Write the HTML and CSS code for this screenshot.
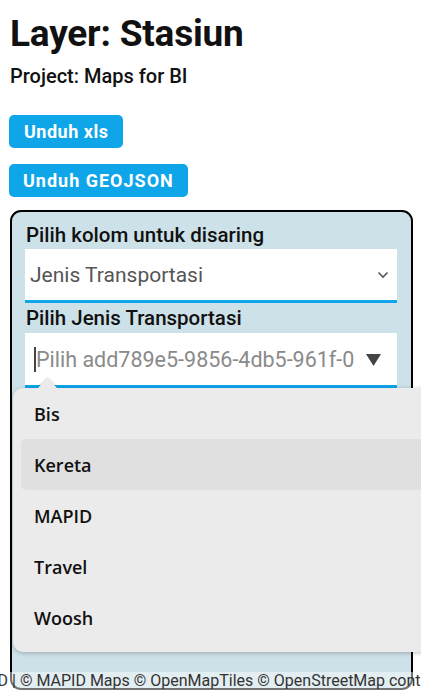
FILE: index.html
```html
<!DOCTYPE html>
<html>
<head>
<meta charset="utf-8">
<link rel="stylesheet" href="styles.css">
</head>
<body>
<div class="page">
  <h1 class="title">Layer: Stasiun</h1>
  <div class="project">Project: Maps for BI</div>
  <div class="actions">
    <button class="btn">Unduh xls</button>
    <button class="btn btn-wide">Unduh GEOJSON</button>
  </div>
  <div class="panel">
    <div class="label">Pilih kolom untuk disaring</div>
    <div class="select">
      <span class="select-text">Jenis Transportasi</span>
      <svg class="chev" width="12" height="8" viewBox="0 0 12 8"><path d="M1.5 1.5 L6 6 L10.5 1.5" fill="none" stroke="#555" stroke-width="1.6"/></svg>
    </div>
    <div class="label label2">Pilih Jenis Transportasi</div>
    <div class="combo">
      <span class="caret"></span>
      <span class="placeholder">Pilih add789e5-9856-4db5-961f-0</span>
      <svg class="tri" width="15" height="12" viewBox="0 0 15 12"><polygon points="0,0 15,0 7.5,12" fill="#444"/></svg>
    </div>
    <div class="menu">
      <span class="notch"></span>
      <div class="item">Bis</div>
      <div class="item active">Kereta</div>
      <div class="item">MAPID</div>
      <div class="item">Travel</div>
      <div class="item">Woosh</div>
    </div>
  </div>
  <div class="attrib">© MAPID | © MAPID Maps © OpenMapTiles © OpenStreetMap contributors</div>
</div>
</body>
</html>
```

FILE: styles.css
```css
* { box-sizing: border-box; }
html, body { margin: 0; padding: 0; background: #fff; overflow: hidden; }
body { width: 421px; height: 696px; font-family: Roboto, "Noto Sans", sans-serif; color: #111; }
.page { position: relative; height: 696px; padding: 0 8px 0 10px; overflow: hidden; }
.title { margin: 0; padding-top: 13px; font-size: 37px; line-height: 42px; font-weight: 700; letter-spacing: -0.2px; }
.project { margin-top: 9px; font-size: 20px; line-height: 24px; font-weight: 500; }
.actions { display: flex; flex-direction: column; align-items: flex-start; gap: 16px; margin-top: 27px; }
.btn { margin: 0 0 0 -1px; border: 0; background: #0ea5e9; color: #fff; font-family: Roboto, sans-serif; font-weight: 700; font-size: 18px; letter-spacing: 0.5px; height: 33px; padding: 0 15px; border-radius: 5px; }
.btn-wide { letter-spacing: 1px; padding: 0 14px; }
.panel { position: relative; margin-top: 13px; height: 480px; border: 2px solid #000; border-radius: 11px; background: #cde1e8; padding: 12px 14px 0 13px; }
.label { font-size: 20.5px; line-height: 23px; font-weight: 500; padding-left: 1px; }
.label2 { margin-top: 4px; }
.select { margin-top: 2px; height: 54px; background: #fff; border-bottom: 3px solid #0ea5e9; display: flex; align-items: center; justify-content: space-between; padding: 0 8px 0 5px; }
.select-text { font-size: 21px; color: #555; }
.combo { margin-top: 3px; height: 55px; background: #fff; border-bottom: 3px solid #0ea5e9; display: flex; align-items: center; padding: 0 16px 0 9px; overflow: hidden; }
.caret { width: 2px; height: 25px; background: #444; flex: none; }
.placeholder { flex: 1; font-size: 21.5px; color: #8a8a8a; white-space: nowrap; overflow: hidden; min-width: 0; }
.tri { flex: none; margin-left: 9px; margin-top: 2px; }
.menu { position: absolute; left: 1px; top: 176px; width: 420px; height: 264px; background: #ebebeb; border-radius: 10px; box-shadow: 0 1px 4px rgba(0,0,0,0.25); padding: 0 0 8px 0; }
.notch { position: absolute; top: -7px; left: 28px; width: 13px; height: 13px; background: #ebebeb; transform: rotate(45deg); box-shadow: -1px -1px 2px rgba(0,0,0,0.12); }
.item { position: relative; height: 51px; display: flex; align-items: center; padding-left: 13px; margin-left: 8px; border-radius: 5px; font-family: "Open Sans", "Noto Sans", sans-serif; font-weight: 600; font-size: 18px; color: #111; }
.item.active { background: #e0e0e0; }
.attrib { position: absolute; left: -58px; top: 672px; width: 560px; height: 18px; background: rgba(255,255,255,0.45); font-size: 16px; line-height: 18px; color: #333; white-space: nowrap; }
```
